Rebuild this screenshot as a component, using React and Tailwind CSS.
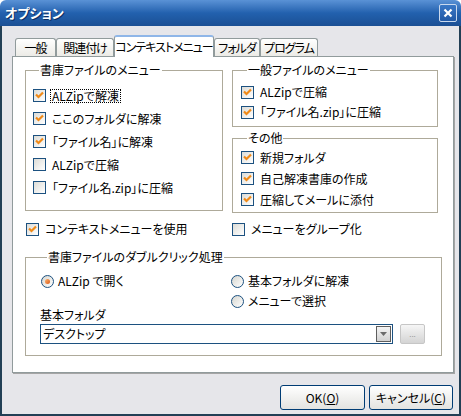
import React from 'react';

// small XP-style controls
function CheckBox({ checked }) {
  return (
    <span className="flex h-[13px] w-[13px] shrink-0 items-center justify-center border border-[#1c5180] bg-linear-to-br from-[#dcdcd7] to-white">
      {checked && (
        <svg width="11" height="11" viewBox="0 0 11 11">
          <path d="M2 4.5 L4.5 7 L9 2.5" stroke="#f08a18" strokeWidth="2.2" fill="none" />
        </svg>
      )}
    </span>
  );
}

function CheckRow({ label, checked, focus, className = '' }) {
  return (
    <div className={`flex items-center gap-[5px] whitespace-nowrap ${className}`}>
      <CheckBox checked={checked} />
      <span className={focus ? 'px-px leading-[12px] outline-1 outline-dotted outline-black' : 'px-px'}>{label}</span>
    </div>
  );
}

function Radio({ checked }) {
  return (
    <span className="flex h-[13px] w-[13px] shrink-0 items-center justify-center rounded-full border border-[#1c5180] bg-linear-to-br from-[#d6d6d0] to-white">
      {checked && <span className="h-[5px] w-[5px] rounded-full bg-linear-to-br from-[#fbb36d] to-[#d8570f]" />}
    </span>
  );
}

function RadioRow({ label, checked, className = '' }) {
  return (
    <div className={`flex items-center gap-[4px] whitespace-nowrap ${className}`}>
      <Radio checked={checked} />
      <span>{label}</span>
    </div>
  );
}

function Group({ title, className = '', children }) {
  return (
    <fieldset className={`border border-[#aeaa9a] ${className}`}>
      <legend className="ml-[6px] px-px leading-[14px]">{title}</legend>
      {children}
    </fieldset>
  );
}

const tabs = [
  { name: '一般', w: 'w-[41px]' },
  { name: '関連付け', w: 'w-[58px]' },
  { name: 'コンテキストメニュー', w: 'w-[100px]', active: true },
  { name: 'フォルダ', w: 'w-[46px]' },
  { name: 'プログラム', w: 'w-[58px]' },
];

export default function App() {
  return (
    <div className="flex h-[416px] w-[461px] flex-col font-['Noto_Sans_CJK_JP',sans-serif] text-[12px] leading-[14px] text-black [font-feature-settings:'palt']">
      {/* title bar */}
      <div className="flex h-[26px] shrink-0 items-center justify-between rounded-t-[6px] bg-linear-to-b from-[#5a92d6] via-[#2261ae] to-[#1b4f94] pl-[5px] pr-[4px]">
        <span className="text-[13px] font-bold text-white [text-shadow:1px_1px_0_#0b2f63]">オプション</span>
        <button className="flex h-[18px] w-[18px] items-center justify-center rounded-[2px] border border-[#c9d9ee] bg-linear-to-b from-[#3a78c6] to-[#2159a6]">
          <svg width="10" height="10" viewBox="0 0 10 10">
            <path d="M1.5 1.5 L8.5 8.5 M8.5 1.5 L1.5 8.5" stroke="white" strokeWidth="2.2" />
          </svg>
        </button>
      </div>

      {/* body */}
      <div className="flex flex-1 flex-col border-x-2 border-b-2 border-[#223f55] bg-[#e6e6ea] pl-[10px] pr-[5px] pt-[9px]">
        {/* tabs */}
        <div className="ml-[3px] flex h-[21px] items-end whitespace-nowrap tracking-[-1px]">
          {tabs.map((t) =>
            t.active ? (
              <div
                key={t.name}
                className={`relative z-10 -mb-px flex h-[22px] items-center justify-center rounded-t-[3px] border-x border-t-2 border-x-[#919b9c] border-t-[#8fb6e8] bg-white ${t.w}`}
              >
                {t.name}
              </div>
            ) : (
              <div
                key={t.name}
                className={`flex h-[18px] items-center justify-center rounded-t-[3px] border-x border-t border-[#919b9c] bg-linear-to-b from-white to-[#ecebe6] ${t.w}`}
              >
                {t.name}
              </div>
            )
          )}
        </div>

        {/* tab panel */}
        <div className="h-[317px] w-[442px] border border-[#919b9c] bg-white px-[12px] pt-[6px] shadow-[1px_1px_0_#a5a5a5]">
          <div className="flex gap-[9px]">
            <Group title="書庫ファイルのメニュー" className="h-[148px] w-[198px] pl-[7px] pt-[7px]">
              <CheckRow className="h-[23px]" label="ALZipで解凍" checked focus />
              <CheckRow className="h-[23px]" label="ここのフォルダに解凍" checked />
              <CheckRow className="h-[23px]" label="「ファイル名」に解凍" checked />
              <CheckRow className="h-[23px]" label="ALZipで圧縮" />
              <CheckRow className="h-[23px]" label="「ファイル名.zip」に圧縮" />
            </Group>
            <div className="flex w-[206px] flex-col">
              <Group title="一般ファイルのメニュー" className="h-[64px] pl-[8px] pt-[5px]">
                <CheckRow className="h-[20px]" label="ALZipで圧縮" checked />
                <CheckRow className="h-[20px]" label="「ファイル名.zip」に圧縮" checked />
              </Group>
              <Group title="その他" className="mt-[4px] h-[82px] pl-[8px] pt-[2px]">
                <CheckRow className="h-[21px]" label="新規フォルダ" checked />
                <CheckRow className="h-[21px]" label="自己解凍書庫の作成" checked />
                <CheckRow className="h-[21px]" label="圧縮してメールに添付" checked />
              </Group>
            </div>
          </div>

          <div className="mt-[6px] flex h-[20px] pl-[1px]">
            <CheckRow className="w-[206px]" label="コンテキストメニューを使用" checked />
            <CheckRow label="メニューをグループ化" />
          </div>

          <Group title="書庫ファイルのダブルクリック処理" className="mt-[11px] h-[106px] w-[417px] pl-[15px] pt-[7px]">
            <div className="flex">
              <div className="flex w-[190px] flex-col">
                <RadioRow className="h-[20px]" label="ALZip で開く" checked />
                <span className="-ml-px mt-[17px]">基本フォルダ</span>
              </div>
              <div className="flex flex-col">
                <RadioRow className="h-[20px]" label="基本フォルダに解凍" />
                <RadioRow className="h-[20px]" label="メニューで選択" />
              </div>
            </div>
            <div className="-ml-px mt-[2px] flex items-center gap-[7px]">
              <div className="flex h-[20px] w-[353px] items-center border border-[#1c5180] bg-white pl-[2px] pr-px">
                <span className="flex-1">デスクトップ</span>
                <span className="flex h-[16px] w-[15px] items-center justify-center border border-[#5e5e5e] bg-linear-to-b from-[#f4f4f4] to-[#d2d2d2]">
                  <svg width="7" height="4" viewBox="0 0 7 4">
                    <path d="M0 0 H7 L3.5 4 Z" fill="#6b6b6b" />
                  </svg>
                </span>
              </div>
              <button className="flex h-[20px] w-[25px] items-center justify-center rounded-[2px] border border-[#c6c6c6] bg-linear-to-b from-[#f6f6f6] to-[#d4d4d4] text-[8px] leading-[8px] text-[#9a9a9a]">
                ...
              </button>
            </div>
          </Group>
        </div>

        {/* dialog buttons */}
        <div className="mt-[12px] flex justify-end gap-[4px] pr-px">
          <button className="flex h-[25px] w-[85px] items-center justify-center rounded-[3px] border border-[#003c74] bg-linear-to-b from-white to-[#e3e3e0]">
            OK(<span className="underline">O</span>)
          </button>
          <button className="flex h-[25px] w-[84px] items-center justify-center rounded-[3px] border border-[#003c74] bg-linear-to-b from-white to-[#e3e3e0]">
            キャンセル(<span className="underline">C</span>)
          </button>
        </div>
      </div>
    </div>
  );
}
